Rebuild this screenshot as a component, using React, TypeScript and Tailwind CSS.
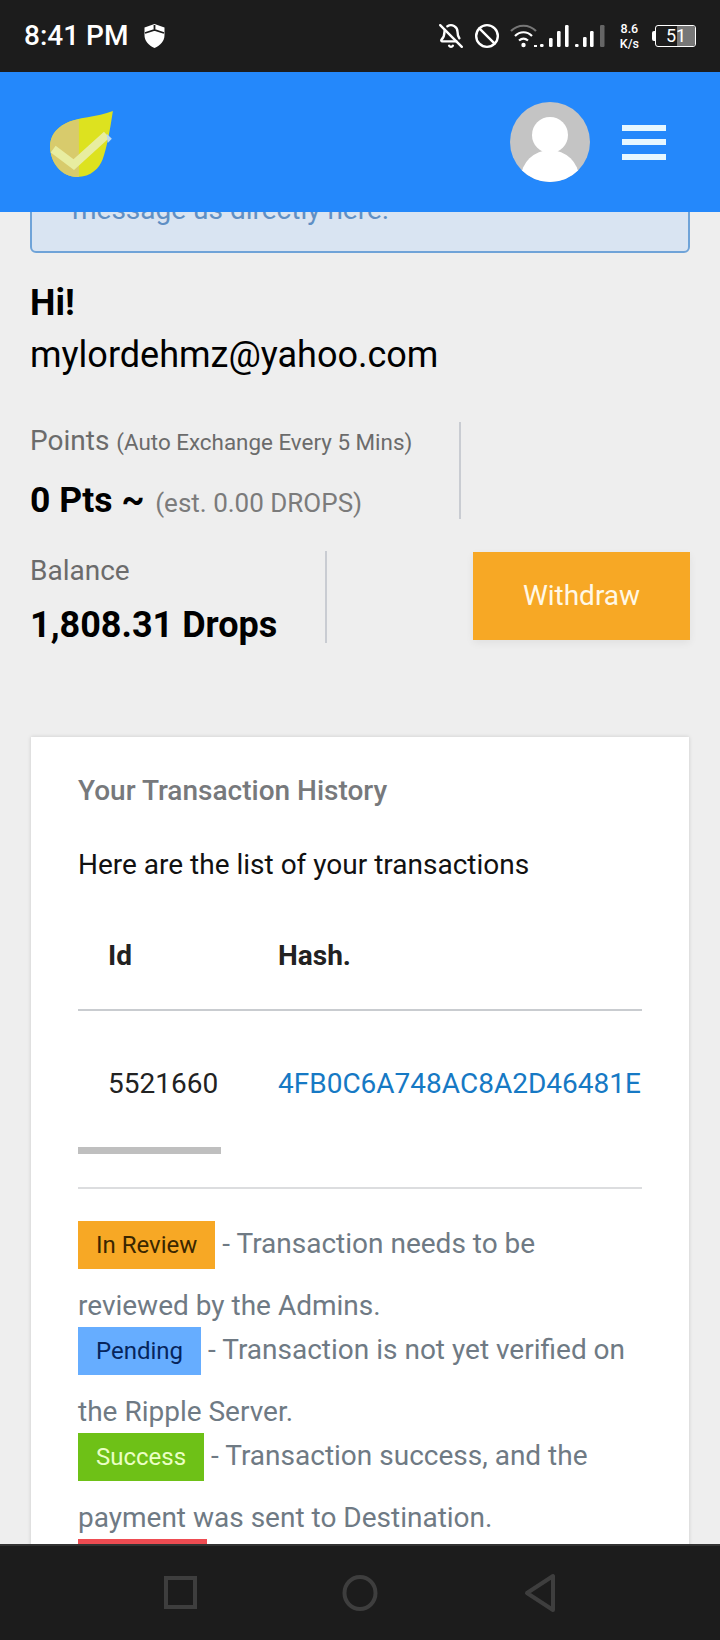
import { Ban, BellOff } from 'lucide-react'

// the signal bars on the status bar, as [x, height]
const BARS = [
  [30, 3],
  [39, 9],
  [47, 16],
  [55, 22],
  [65, 3],
  [73, 10],
  [80, 16],
  [90, 22],
]

function StatusBar() {
  return (
    <div className="flex h-[72px] flex-none items-center justify-between bg-[#1c1c1c] pl-[24px] pr-[24px] text-white">
      <div className="flex items-center gap-[16px]">
        <span className="text-[28px] leading-none font-medium">8:41 PM</span>
        <svg width="21" height="24" viewBox="0 0 21 24" fill="#fff">
          <path d="M10.5 0 20.5 3.5V11c0 6-4 10.500-10 13C4.500 21.500.5 17 .5 11V3.500z" />
          <path d="M1 9 10.500 6 20 9M10.500 1v5" stroke="#1c1c1c" strokeWidth="1.800" fill="none" />
        </svg>
      </div>
      <div className="flex items-center">
        <BellOff size={26} strokeWidth={2.2} className="mr-[10px]" />
        <Ban size={26} strokeWidth={2.2} className="mr-[10px]" />
        <svg width="95" height="26" viewBox="0 0 95 26" className="mr-[15px]">
          <path d="M1 8C8 1 19 1 26 8" stroke="#777" strokeWidth="2.200" fill="none" />
          <path d="M5 13C10 8 17 8 22 13M9 17.500C12 15 15 15 18 17.500" stroke="#fff" strokeWidth="2.200" fill="none" />
          <circle cx="13.500" cy="22" r="2.200" fill="#fff" />
          <rect x="24" y="22" width="3" height="2" fill="#fff" />
          {BARS.map(([x, h], i) => (
            <rect
              key={x}
              x={x}
              y={24 - h}
              width={i === 7 ? 4.5 : 3.6}
              height={h}
              rx="1.200"
              fill={i === 7 ? '#666' : '#fff'}
            />
          ))}
        </svg>
        <div className="mr-[13px] flex flex-col items-center text-[12.500px] leading-[15px] font-medium">
          <span>8.6</span>
          <span>K/s</span>
        </div>
        <div className="mr-[-1px] h-[10px] w-[3px] rounded-l-[2px] bg-white" />
        <div className="relative ml-[1px] flex h-[22px] w-[41px] items-center overflow-hidden rounded-[3px] border-[1.500px] border-white">
          <div className="absolute top-0 right-0 bottom-0 w-[18px] bg-[#777]" />
          <span className="relative ml-[10px] text-[18px] leading-none text-white">51</span>
        </div>
      </div>
    </div>
  )
}

function Header() {
  return (
    <div className="relative z-10 flex h-[140px] flex-none items-center justify-between bg-[#2488fb] pr-[54px] pl-[48px]">
      <svg width="68" height="70" viewBox="0 0 66 68" className="mt-[4px]">
        <path d="M63 2C48 8 28 8 17 14 7 19 2 27 2 36 2 53 14 66 28 66 42 66 50 57 53 49 57 38 60 22 63 2Z" fill="#dde21f" />
        <path d="M30 66C14 67 2 53 2 36 2 27 7 19 17 14 21 12 25 11 30 10Z" fill="#d8cb6c" />
        <path d="M5 39 25 54 57 25" stroke="#e8eda0" strokeWidth="8" fill="none" />
        <path d="M57 24 62 29 58 33Z" fill="#bcd8f0" />
      </svg>
      <div className="flex items-center gap-[32px]">
        <svg width="80" height="80" viewBox="0 0 80 80">
          <defs>
            <clipPath id="avatar">
              <circle cx="40" cy="40" r="40" />
            </clipPath>
          </defs>
          <circle cx="40" cy="40" r="40" fill="#c4c4c4" />
          <g clipPath="url(#avatar)" fill="#fff">
            <circle cx="40" cy="33" r="18" />
            <ellipse cx="40" cy="76" rx="29" ry="28" />
          </g>
        </svg>
        <div className="flex flex-col gap-[8.500px]">
          <div className="h-[6px] w-[44px] bg-[#e6f7ff]" />
          <div className="h-[6px] w-[44px] bg-[#e6f7ff]" />
          <div className="h-[6px] w-[44px] bg-[#e6f7ff]" />
        </div>
      </div>
    </div>
  )
}

function Legend({ label, cls, text }: { label: string; cls: string; text: string }) {
  return (
    <>
      <span
        className={`mb-[15px] mr-[7px] inline-block h-[48px] px-[18px] align-baseline text-[24px] leading-[48px] ${cls}`}
      >
        {label}
      </span>
      {text}
      <br />
    </>
  )
}

export default function App() {
  return (
    <div className="flex h-[1640px] w-[720px] flex-col overflow-hidden bg-[#eeeeee] font-['Roboto',sans-serif]">
      <StatusBar />
      <Header />
      <div className="min-h-0 flex-1 overflow-hidden">
        <div className="mx-[30px] mt-[-32px] h-[73px] rounded-[6px] border-2 border-[#6fa3d8] bg-[#d9e4f2] px-[40px] pt-[8px] text-[28px] leading-[40px] text-[#5f8fc4]">
          message us directly here.
        </div>

        <div className="mx-[30px] mt-[24px] text-[36px] leading-[52px] text-black">
          <div className="font-bold">Hi!</div>
          <div>mylordehmz@yahoo.com</div>
        </div>

        <div className="mx-[30px] mt-[41px] flex h-[97px] w-[431px] flex-col border-r-2 border-[#c9ccd2]">
          <div className="mt-[1px] text-[28px] leading-[36px] text-[#6b6b6b]">
            Points <span className="text-[22.400px]">(Auto Exchange Every 5 Mins)</span>
          </div>
          <div className="mt-[20px] text-[35.500px] leading-[40px] font-bold text-black">
            0 Pts ~ <span className="ml-[2px] text-[26px] font-normal text-[#7b7b7b]">(est. 0.00 DROPS)</span>
          </div>
        </div>

        <div className="mx-[30px] mt-[32px] flex items-start justify-between">
          <div className="h-[92px] w-[297px] border-r-2 border-[#c9ccd2]">
            <div className="mt-[2px] text-[28px] leading-[36px] text-[#6b6b6b]">Balance</div>
            <div className="mt-[16px] text-[36px] leading-[40px] font-bold text-black">1,808.31 Drops</div>
          </div>
          <div className="mt-[1px] flex h-[88px] w-[217px] items-center justify-center bg-[#f7a825] text-[28px] text-[#fff8e6] shadow-[0_3px_8px_rgba(0,0,0,0.06)]">
            Withdraw
          </div>
        </div>

        <div className="mx-[31px] mt-[94px] h-[900px] bg-white px-[47px] pt-[36px] shadow-[0_0_4px_rgba(0,0,0,0.15)]">
          <div className="text-[28px] leading-[36px] font-medium text-[#77797c]">Your Transaction History</div>
          <div className="mt-[38px] text-[28px] leading-[36px] text-[#111]">Here are the list of your transactions</div>

          <table className="mt-[20px] w-[564px] table-fixed border-collapse text-left text-[28px]">
            <thead>
              <tr className="h-[107px] border-b-2 border-[#c9ccd0]">
                <th className="w-[200px] pl-[30px] font-bold text-[#222]">Id</th>
                <th className="font-bold text-[#222]">Hash.</th>
              </tr>
            </thead>
            <tbody>
              <tr className="h-[146px]">
                <td className="pl-[30px] text-[#222]">5521660</td>
                <td className="whitespace-nowrap text-[#1679c4]">4FB0C6A748AC8A2D46481E</td>
              </tr>
            </tbody>
          </table>
          <div className="mt-[-9px] h-[7px] w-[143px] bg-[#bfbfbf]" />
          <div className="mt-[33px] h-[2px] w-[564px] bg-[#dcdddf]" />

          <div className="mt-[32px] w-[564px] text-[28px] leading-[43px] text-[#6f7a84]">
            <Legend label="In Review" cls="bg-[#f7a825] text-[#3a2600]" text="- Transaction needs to be reviewed by the Admins." />
            <Legend label="Pending" cls="bg-[#66adff] text-[#06255c]" text="- Transaction is not yet verified on the Ripple Server." />
            <Legend label="Success" cls="bg-[#6ec117] text-[#eaffc4]" text="- Transaction success, and the payment was sent to Destination." />
            <Legend label="Rejected" cls="bg-[#ee4c52] text-[#4a0a0c]" text="- Transaction failed." />
          </div>
        </div>
      </div>
      <div className="flex h-[96px] flex-none items-center border-t-2 border-[#333] bg-[#1c1c1c] pb-[1px]">
        <svg width="720" height="40" viewBox="0 0 720 40" fill="none" stroke="#3e3e3e" strokeWidth="4">
          <rect x="166" y="5" width="29" height="29" />
          <ellipse cx="360" cy="20" rx="15.500" ry="16" />
          <path d="M553 3V37L527 20Z" strokeLinejoin="round" />
        </svg>
      </div>
    </div>
  )
}
